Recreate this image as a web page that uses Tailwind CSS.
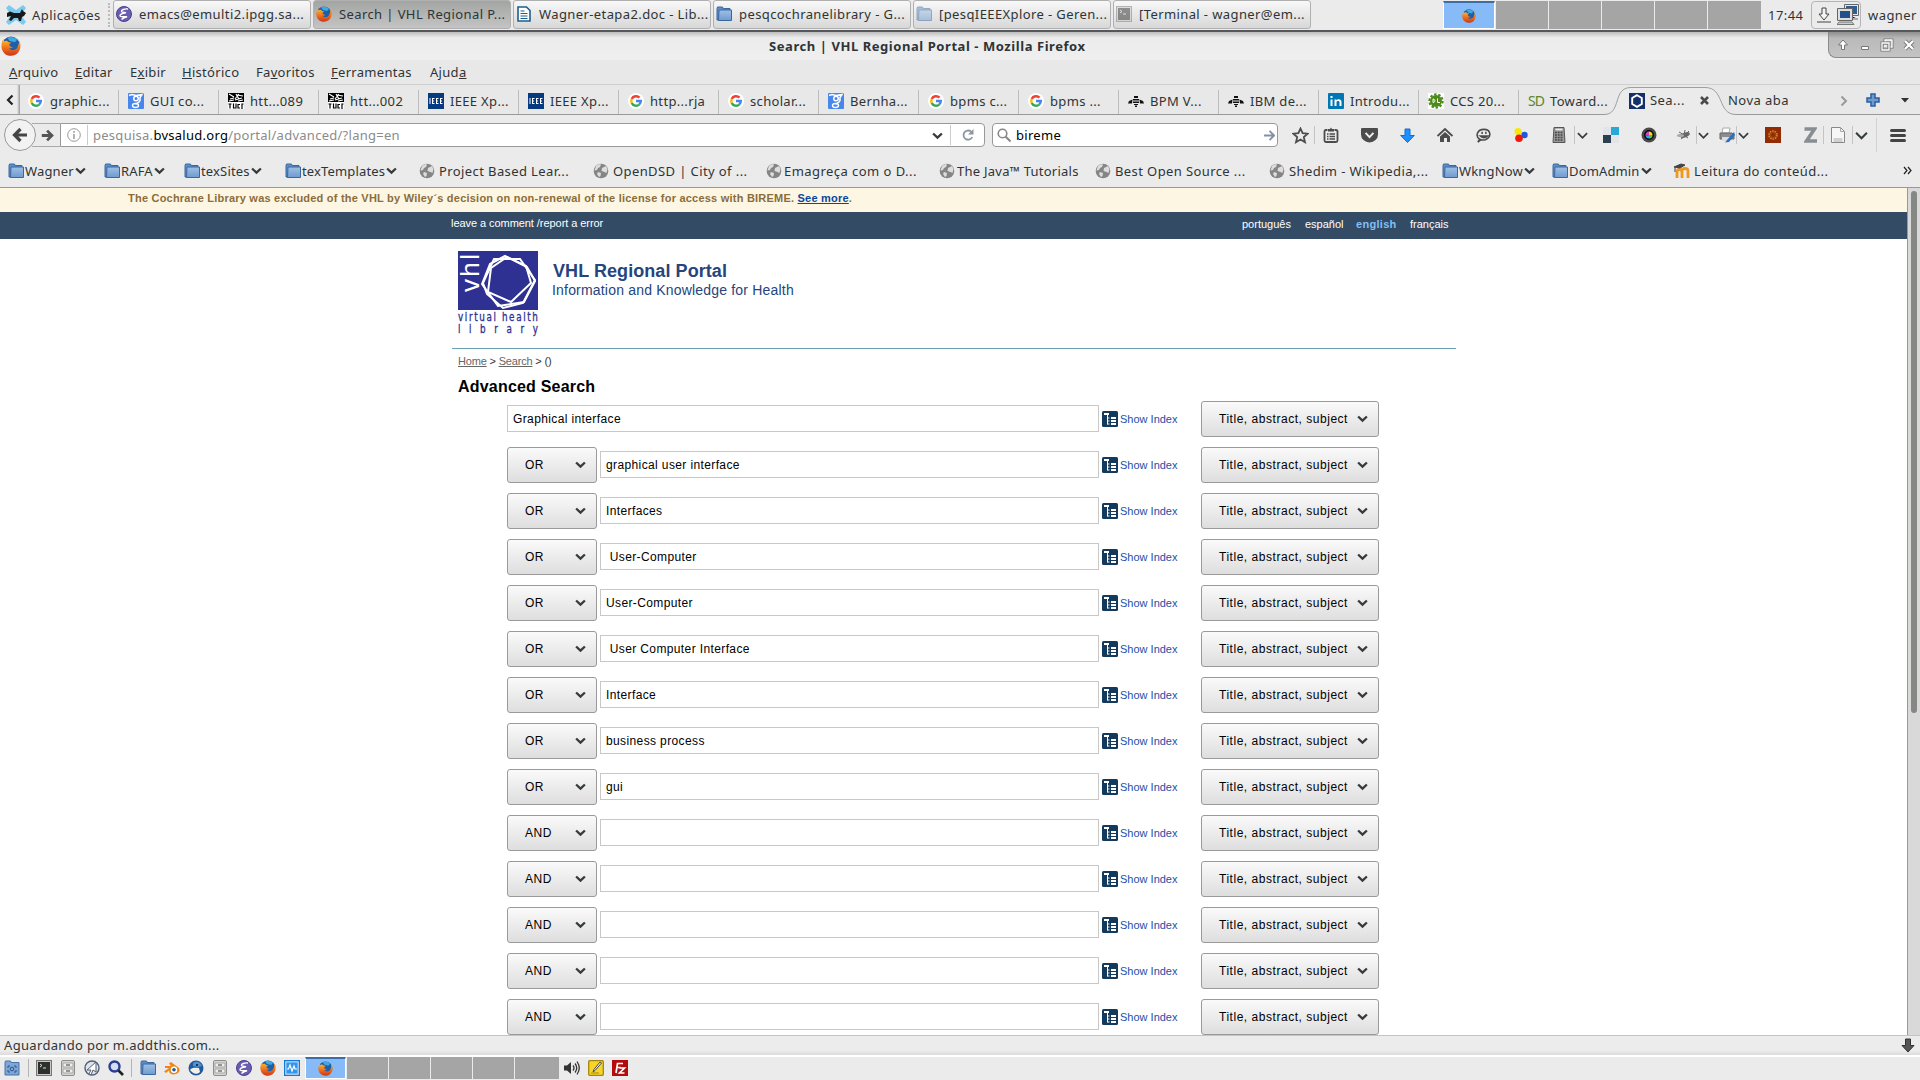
<!DOCTYPE html>
<html lang="pt">
<head>
<meta charset="utf-8">
<title>Search | VHL Regional Portal</title>
<script src="https://cdn.jsdelivr.net/npm/@tailwindcss/browser@4"></script>
</head>
<body class="w-[1920px] h-[1080px] overflow-hidden flex flex-col bg-[#ececec] font-['Noto_Sans',sans-serif] text-[13px] leading-4 tracking-[0.45px] text-[#2e3436] whitespace-nowrap">
<svg class="absolute size-0">
  <defs>
    <linearGradient id="fo" x1="0" y1="0" x2="0" y2="1"><stop offset="0" stop-color="#ffb52b"/><stop offset=".5" stop-color="#f0701c"/><stop offset="1" stop-color="#c9371a"/></linearGradient>
    <linearGradient id="fd" x1="0" y1="0" x2="0" y2="1"><stop offset="0" stop-color="#9dc0e6"/><stop offset="1" stop-color="#6f9bcf"/></linearGradient>
  </defs>
  <symbol id="firefox" viewBox="0 0 16 16"><circle cx="8" cy="7.6" r="7.2" fill="#1e5fa8"/><path d="M5 1.500C7 .3 11 .5 13 3l-2 2-4-1z" fill="#3fa9e0"/><path d="M1.200 3.200C0 7-.2 11 2.600 13.700c3 2.900 8.400 2.700 11-.4C16 10.500 16.200 6 14.300 3.300c.3 2.200-.1 3.600-.8 4.700-.2 3.400-5.500 4.200-6.900 1.700 1.200.4 2.300 0 3-.7-1.900-.1-3.200-1.300-3-2.600.5-.5 1.300-.5 1.700-1C7 4.800 5.600 4.900 5 3.900c-.9-.2-1.700 0-2.300.3z" fill="url(#fo)"/></symbol>
  <symbol id="folder" viewBox="0 0 16 16"><path d="M1 2.500 1.500 1h5l.7 1.500H14V14H1z" fill="#5f8fc8" stroke="#3a679f"/><path d="M3 4h12.500v10.500H2.500z" fill="url(#fd)" stroke="#3a679f"/></symbol>
  <symbol id="emacs" viewBox="0 0 16 16"><circle cx="8" cy="8" r="7.500" fill="#6a5db0" stroke="#4a4190"/><path d="M12 3C8.500 2.500 5 4 5.500 5.500c.6 1.200 3 .8 4.500 1.200-4.500.3-6.500 2.300-6 3.300.8 1.600 5 .2 7 .7-1.500.3-4 1.300-5.500 2.800" fill="none" stroke="#fff" stroke-width="1.400"/></symbol>
  <symbol id="google" viewBox="0 0 16 16"><circle cx="8" cy="8" r="8" fill="#fff"/><g fill="none" stroke-width="2.400"><path d="M11.500 4.700A4.800 4.800 0 0 0 3.700 6" stroke="#ea4335"/><path d="M3.700 6a4.800 4.800 0 0 0 0 4" stroke="#fbbc05"/><path d="M3.700 10a4.800 4.800 0 0 0 7.500 1.600" stroke="#34a853"/><path d="M11.200 11.600A4.800 4.800 0 0 0 12.800 8H8" stroke="#4285f4"/></g></symbol>
  <symbol id="scholar" viewBox="0 0 16 16"><rect width="16" height="16" rx="1" fill="#4787ed"/><path d="M1 2.500 4 1.500l4 1 6-1-2 3v3c-1 3-4 2-4 4" fill="none" stroke="#fff" stroke-width="1.500"/><circle cx="8" cy="5.500" r="2.300" fill="none" stroke="#fff" stroke-width="1.500"/><ellipse cx="7.500" cy="12.500" rx="3" ry="2" fill="none" stroke="#fff" stroke-width="1.400"/></symbol>
  <symbol id="mono" viewBox="0 0 16 16"><rect width="16" height="16" fill="#fff"/><path d="M0 0h16v9H0z"/><path d="M1 1l5 3M8 1l3 5M2 6l4-1M9 2l6 1M7 7l7-2M11 1l-4 5M1 8l5-1M10 8l5-1" stroke="#fff" stroke-width="1.200"/><path d="M.5 11h3M2 11v4.500M5.500 10.500V15H8v-4.500M12 11.500h-2V15h2M14 16v-5h1.500" fill="none" stroke="#000" stroke-width="1.200"/></symbol>
  <symbol id="ieee" viewBox="0 0 16 16"><rect width="16" height="16" fill="#063b82"/><path d="M2 5v6M4 5.500h2.500M4 8h2M4 10.500h2.500M4.500 5v6M8 5.500h2.500M8 8h2M8 10.500h2.500M8.500 5v6M12 5.500h2.500M12 8h2M12 10.500h2.500M12.500 5v6" stroke="#fff"/></symbol>
  <symbol id="bee" viewBox="0 0 16 16"><path d="M6 3h4v2H6zM5 6h6v1.500H5zM5 8.500h6V10H5zM6 11h4v1H6zM7 12.500h2V14H7zM4.500 6.500 1 8 0 10.500h4zM11.500 6.500 15 8l1 2.500h-4z" fill="#111"/></symbol>
  <symbol id="in" viewBox="0 0 16 16"><rect width="16" height="16" rx="1" fill="#0077b5"/><path d="M2.500 6.500h2V13h-2zM2.500 3h2v2h-2zM6.500 6.500h2v1c1-1.700 5-1.800 5 1.700V13h-2V9.500c0-2-3-1.800-3 0V13h-2z" fill="#fff"/></symbol>
  <symbol id="dl" viewBox="0 0 16 16"><rect width="16" height="16" fill="#fff"/><circle cx="8" cy="8" r="6" fill="#4d8a1c"/><circle cx="8" cy="8" r="6.700" fill="none" stroke="#4d8a1c" stroke-width="2" stroke-dasharray="2.500 1.700"/><path d="M5 6v3.500c2.500 0 2.500-3.500 0-3.500M9.500 5.500v4H12" fill="none" stroke="#fff" stroke-width="1"/></symbol>
  <symbol id="hex" viewBox="0 0 16 16"><rect width="16" height="16" fill="#14306b"/><path d="M8 2.200 12.800 5v6L8 13.800 3.200 11V5z" fill="none" stroke="#fff" stroke-width="1.900"/></symbol>
  <symbol id="globe" viewBox="0 0 16 16"><circle cx="8" cy="8" r="7.300" fill="#858585"/><path d="M3 3c2-2 4-2 5-1.500L7 4 5 5 4 7 1.500 7.500zM9 5l4-2 1.500 3-1 4-2-1-3-1zM5 9l3 1-.5 3-1.500 1-2-3z" fill="#ddd"/></symbol>
  <symbol id="chev" viewBox="0 0 10 10"><path d="M1 3.200 5 7l4-3.800" fill="none" stroke="#363b3d" stroke-width="2.100"/></symbol>
  <symbol id="chevthin" viewBox="0 0 12 12"><path d="M1 3.500 6 8.500l5-5" fill="none" stroke="#363b3d" stroke-width="1.900"/></symbol>
  <symbol id="idx" viewBox="0 0 16 16"><rect width="16" height="16" rx="1.500" fill="#133a5c"/><path d="M5.500 3v10.500M5.500 7h2M5.500 13h2M5.500 10h2" fill="none" stroke="#fff"/><path d="M9 7h5M9 10h5M9 13h5M2 3h5" stroke="#fff" stroke-width="1.900"/></symbol>
  <symbol id="cabinet" viewBox="0 0 16 16"><rect x="1.500" y=".5" width="13" height="15" rx="1.500" fill="#d5d6d2" stroke="#8d8f8a"/><path d="M3 3h10v4H3zM3 9h10v4H3z" fill="#eee" stroke="#a5a7a2"/><path d="M6 5h4M6 11h4" stroke="#777" stroke-width="1.300"/></symbol>
  <symbol id="term" viewBox="0 0 16 16"><rect x=".5" y=".5" width="15" height="15" fill="#c9cac6" stroke="#777"/><rect x="2" y="2" width="12" height="12" fill="#2b302d"/><path d="m4 4 2 1.500L4 7M7 8h3" fill="none" stroke="#ddd"/></symbol>
</svg>

<!-- desktop panel -->
<header class="h-8 shrink-0 flex items-start border-b-2 border-[#55575a] bg-[#ebebeb]">
  <div class="w-[113px] h-[29px] flex items-center pl-[6px] gap-[5px]">
    <svg class="w-[21px] h-[22px]" viewBox="0 0 21 22"><path d="M3 1 10 6l7-5 3 3-5 7 5 7-3 3-7-5-7 5-3-3 5-7-5-7z" fill="#7ccaf0"/><path d="M1 9l3-1.500L8 9h6l2-4 1 2 3 2-2 3-2 1-1 4h-2l-1-3H8l-3 3-2-1 2-4-4 1z" fill="#181818"/></svg>
    <span>Aplicações</span>
    <span class="ml-[2px] h-6 border-l-2 border-dotted border-[#bbb]"></span>
  </div>
  <div id="tasks" class="flex gap-[2px] w-[1330px]"></div>
  <div class="flex gap-[1px] h-[28px] mt-[1px]">
    <div class="w-[52px] border border-white border-t-2 border-t-[#3c6ea5] bg-[#86bbf7] grid place-items-center"><svg class="size-[14px]"><use href="#firefox"/></svg></div>
    <div class="w-[52px] bg-[#a5a5a5]"></div><div class="w-[52px] bg-[#a5a5a5]"></div><div class="w-[52px] bg-[#a5a5a5]"></div><div class="w-[52px] bg-[#a5a5a5]"></div><div class="w-[53px] bg-[#a5a5a5]"></div>
  </div>
  <div class="h-[29px] flex items-center pl-[7px]">
    <span class="w-[43px]">17:44</span>
    <div class="w-[50px] h-[28px] border border-[#b5b5b5] rounded-sm flex items-center justify-between pl-[5px] pr-[1px]">
      <svg class="w-[14px] h-[16px]" viewBox="0 0 14 16"><path d="M5 1h4v6h3l-5 6-5-6h3zM0 15h14" fill="#f4f4f4" stroke="#444"/></svg>
      <svg class="w-[22px] h-[21px]" viewBox="0 0 22 21"><path d="M8 1h13v10H8z" fill="#2e5c95" stroke="#e8e8e8" stroke-width="2"/><path d="M7.500.500h14v11h-14z" fill="none" stroke="#666"/><path d="M14 12v3h7" stroke="#aaa" stroke-width="2"/><path d="M2 6h12v9H2z" fill="#24508a" stroke="#ddd" stroke-width="2"/><path d="M.500 4.500h15v12H.500z" fill="none" stroke="#666"/><path d="M2 18h13l2 2.500H0z" fill="#ccc" stroke="#777"/></svg>
    </div>
    <span class="ml-[7px]">wagner</span>
  </div>
</header>

<!-- window title -->
<div class="h-7 shrink-0 flex items-center bg-linear-to-b from-[#bdbdbd] via-[#ececec] via-20% to-[#efefef]">
  <svg class="size-[20px] ml-[1px]"><use href="#firefox"/></svg>
  <div class="w-[1807px] pl-[748px] pb-px font-bold tracking-[0.56px]">Search | VHL Regional Portal - Mozilla Firefox</div>
  <div class="w-[92px] h-[26px] self-start bg-linear-to-b from-[#8f8f8f] via-[#b9b9b9] via-25% to-[#c4c4c4] border-l border-b border-[#8a8a8a] rounded-bl-lg flex items-center gap-[6px] pl-[6px]">
    <svg class="size-4" viewBox="0 0 16 16"><path d="M8 3 12.500 8H9.500v4.500h-3V8h-3z" fill="#fff" stroke="#777"/></svg>
    <svg class="size-4" viewBox="0 0 16 16"><path d="M4.500 9.500h7v3h-7z" fill="#fff" stroke="#777"/></svg>
    <svg class="size-4" viewBox="0 0 16 16"><path d="M6 3h7v7H6z" fill="none" stroke="#777" stroke-width="3"/><path d="M6 3h7v7H6z" fill="#bbb" stroke="#fff" stroke-width="1.300"/><path d="M3 6h7v7H3z" fill="#bbb" stroke="#777" stroke-width="3"/><path d="M3 6h7v7H3zM5 9h3" fill="none" stroke="#fff" stroke-width="1.300"/></svg>
    <svg class="size-4" viewBox="0 0 16 16"><path d="m4 4 8 8M12 4l-8 8" stroke="#777" stroke-width="4"/><path d="m4 4 8 8M12 4l-8 8" stroke="#fff" stroke-width="2.300"/></svg>
  </div>
</div>

<!-- menu -->
<nav class="h-[25px] shrink-0 flex items-center pl-[9px] bg-[#e8e8e8] border-b border-[#cfcfcf] tracking-[0.3px]">
  <span class="w-[66px]"><u>A</u>rquivo</span><span class="w-[55px]"><u>E</u>ditar</span><span class="w-[52px]">E<u>x</u>ibir</span><span class="w-[74px]"><u>H</u>istórico</span><span class="w-[75px]">Fa<u>v</u>oritos</span><span class="w-[99px]"><u>F</u>erramentas</span><span>Ajud<u>a</u></span>
</nav>

<!-- tabs -->
<div class="h-[30px] shrink-0 flex items-center border-b border-[#999] bg-[#e8e8e8] relative">
  <div class="w-[20px] h-full shrink-0 flex items-center justify-center bg-linear-to-r from-[#ececec] from-85% to-[#999]"><svg class="w-[8px] h-[12px]" viewBox="0 0 8 12"><path d="M6.500 1.500 2 6l4.500 4.500" fill="none" stroke="#222" stroke-width="2.200"/></svg></div>
  <div id="tabs" class="flex h-6 mt-1 -ml-[1px] w-[1600px] shrink-0"></div>
  <div class="relative h-full w-[109px] shrink-0 flex items-center">
    <svg class="absolute -left-[15px] top-0 w-[132px] h-[31px]" viewBox="0 0 132 31"><path d="M0 31V29.500C18 29.500 8 2.500 27 2.500h74c20 0 12 27 31 27V31z" fill="#ebebeb"/><path d="M0 29.500C18 29.500 8 2.500 27 2.500h74c20 0 12 27 31 27" fill="none" stroke="#9aa0a6"/></svg>
    <svg class="relative size-[16px] ml-[10px] mt-[2px]"><use href="#hex"/></svg>
    <span class="relative ml-[5px] w-[50px]">Sea...</span>
    <svg class="relative size-[9px] mt-[2px]" viewBox="0 0 9 9"><path d="m1 1 7 7M8 1 1 8" stroke="#4a4a4a" stroke-width="2.600"/></svg>
  </div>
  <span class="w-[112px]">Nova aba</span>
  <svg class="w-[8px] h-[12px] mt-[2px]" viewBox="0 0 8 12"><path d="M1.500 1.500 6 6 1.500 10.500" fill="none" stroke="#999" stroke-width="2"/></svg>
  <svg class="size-[14px] ml-[18px] mt-px" viewBox="0 0 14 14"><path d="M5 1h4v4h4v4H9v4H5V9H1V5h4z" fill="#6d9bd2" stroke="#2b5d9e" stroke-width="1.500"/></svg>
  <svg class="w-[8px] h-[5px] ml-[21px] mt-[2px]" viewBox="0 0 8 5"><path d="M0 0h8L4 4.500z" fill="#2e3436"/></svg>
</div>

<!-- navigation -->
<div class="h-[41px] shrink-0 flex items-center bg-[#ebebeb] pb-px">
  <div class="size-[32px] ml-[4px] rounded-full border border-[#999] bg-[#f2f2f2] grid place-items-center z-10"><svg class="size-[16px]" viewBox="0 0 16 16"><path d="M8.500 2 2.500 8l6 6M3 8h12" fill="none" stroke="#454545" stroke-width="3.200"/></svg></div>
  <div class="w-[28px] h-[24px] -ml-[4px] border-y border-[#aaa] grid place-items-center pl-[3px]"><svg class="size-[13px]" viewBox="0 0 16 16"><path d="M7.500 2 13.500 8l-6 6M13 8H1" fill="none" stroke="#555" stroke-width="3.400"/></svg></div>
  <div class="w-[925px] h-[24px] bg-white border border-[#999] rounded-r-sm flex items-center">
    <svg class="size-[14px] ml-[6px] shrink-0" viewBox="0 0 14 14"><circle cx="7" cy="7" r="6.300" fill="none" stroke="#999"/><path d="M7 3v1.700M7 6v5" stroke="#999" stroke-width="1.500"/></svg>
    <span class="ml-[6px] pl-[5px] h-[20px] border-l border-[#ccc] flex-1 text-[#8c8c8c] leading-[20px] tracking-[0.27px]">pesquisa.<span class="text-black">bvsalud.org</span>/portal/advanced/?lang=en</span>
    <svg class="size-[11px] mr-[7px]"><use href="#chev"/></svg>
    <span class="h-[20px] w-[34px] border-l border-[#ccc] grid place-items-center"><svg class="size-[14px]" viewBox="0 0 14 14"><path d="M10 3.500A4.600 4.600 0 1 0 11.300 9" fill="none" stroke="#8d96a0" stroke-width="1.800"/><path d="M12.500 1v5.500H7z" fill="#8d96a0"/></svg></span>
  </div>
  <div class="w-[286px] h-[24px] ml-[7px] bg-white border border-[#999] rounded-sm flex items-center pl-[4px] pr-[2px] text-black">
    <svg class="size-[14px]" viewBox="0 0 14 14"><circle cx="5.500" cy="5.500" r="4.300" fill="none" stroke="#888" stroke-width="1.600"/><path d="m8.500 8.500 5 5" stroke="#888" stroke-width="2"/></svg>
    <span class="ml-[5px] flex-1 tracking-[0.3px]">bireme</span>
    <svg class="size-[11px]" viewBox="0 0 12 12"><path d="M6 1l5 5-5 5M11 6H0" fill="none" stroke="#8392a3" stroke-width="2"/></svg>
  </div>
  <div class="flex items-center h-full ml-[8px]">
    <div class="w-[28px] grid place-items-center"><svg class="size-[17px]" viewBox="0 0 17 17"><path d="m8.500 1.500 2.100 4.700 5 .5-3.800 3.400 1.200 5.100-4.500-2.700L4 15.200l1.200-5.100L1.400 6.700l5-.5z" fill="none" stroke="#4c4c4c" stroke-width="1.800"/></svg></div>
    <div class="w-px h-[18px] bg-[#c4c4c4]"></div>
    <div class="w-[35px] pr-[4px] grid place-items-center"><svg class="size-[16px]" viewBox="0 0 16 16"><path d="M4.500 3H3Q1.500 3 1.500 4.500v9Q1.500 15 3 15h10q1.500 0 1.500-1.500v-9Q14.500 3 13 3h-1.500" fill="none" stroke="#4c4c4c" stroke-width="1.800"/><path d="M5 4.500V2h2l1-1.500L9 2h2v2.500z" fill="#4c4c4c"/><path d="M4 7h1.500M6.500 7H12M4 9.500h1.500M6.500 9.500H12M4 12h1.500M6.500 12H12" stroke="#4c4c4c" stroke-width="1.500"/></svg></div>
    <div class="w-[38px] grid place-items-center"><svg class="w-[17px] h-[15px]" viewBox="0 0 16 14"><path d="M1 0h14q1 0 1 1v5a8 7.500 0 0 1-16 0V1q0-1 1-1z" fill="#4c4c4c"/><path d="m4.300 4.500 3.700 4 3.700-4" fill="none" stroke="#eee" stroke-width="1.900"/></svg></div>
    <div class="w-[38px] grid place-items-center"><svg class="size-[15px]" viewBox="0 0 15 15"><path d="M5 1h5v6.500h4.300L7.500 14.500.700 7.500H5z" fill="#1e90ff" stroke="#0f6fd4"/></svg></div>
    <div class="w-[38px] grid place-items-center"><svg class="size-[16px]" viewBox="0 0 16 16"><path d="M.500 9 8 2l7.500 7" fill="none" stroke="#4c4c4c" stroke-width="1.900"/><path d="M3 9.500 8 5l5 4.500V15h-3v-4H7v4H3z" fill="#4c4c4c"/></svg></div>
    <div class="w-[38px] grid place-items-center"><svg class="size-[15px]" viewBox="0 0 16 16"><path d="M2 15l2-3C-1 9 1 1.500 8.500 1.500S17 9.500 10 12.500q-3 .5-4.500 0z" fill="none" stroke="#4c4c4c" stroke-width="1.700"/><path d="M6.500 4v2.500M10.500 4v2.500M4.500 8.500q4 3.500 8 0z" stroke="#4c4c4c" stroke-width="1.600" fill="#4c4c4c"/></svg></div>
    <div class="w-[38px] grid place-items-center"><svg class="size-[14px]" viewBox="0 0 14 14"><circle cx="4" cy="3.500" r="3.500" fill="#f8e800"/><circle cx="10.500" cy="7" r="3.200" fill="#1f57e0"/><circle cx="5" cy="10.200" r="3.800" fill="#f01808"/></svg></div>
    <div class="w-[34px] pl-[4px] grid place-items-center"><svg class="size-[16px]" viewBox="0 0 16 16"><path d="M3 .5h10l1 15H2z" fill="#999" stroke="#555"/><path d="M4.500 2.500h7" stroke="#eee" stroke-width="1.600"/><path d="M4 5.500h8M4 8h8M4 10.500h8M4 13h8" stroke="#444" stroke-width="1.300" stroke-dasharray="1.800 1"/></svg></div>
    <div class="w-px h-[18px] bg-[#c4c4c4]"></div><div class="w-[14px] grid place-items-center"><svg class="size-[11px]"><use href="#chevthin"/></svg></div>
    <div class="w-[44px] grid place-items-center"><svg class="size-[16px]" viewBox="0 0 16 16"><path d="M0 0h8v8H0z" fill="#dfe5e8"/><path d="M8 0h8v8H8z" fill="#29a8d6"/><path d="M0 8h8v8H0z" fill="#2b3f50"/><path d="M8 8h8v8H8z" fill="#e2e4e5"/></svg></div>
    <div class="w-[32px] grid place-items-center"><svg class="size-[16px]" viewBox="0 0 16 16"><circle cx="8" cy="8" r="7.500" fill="#4a4a4a"/><circle cx="8" cy="8" r="5" fill="#0b0b0b"/><path d="M8 8V4.500A3.500 3.500 0 0 0 4.600 9z" fill="#e03cc0"/><path d="M8 8V4.500A3.500 3.500 0 0 1 11.500 8z" fill="#f1d821"/><path d="M8 8l-3.400 1A3.500 3.500 0 0 0 8 11.500z" fill="#35a3f2"/><path d="M8 8h3.500A3.500 3.500 0 0 1 8 11.500z" fill="#3fd24a"/></svg></div>
    <div class="w-[31px] pl-[7px] grid place-items-center"><svg class="size-[16px]" viewBox="0 0 16 16"><path d="M3 5l5 3M9 3l-1 5M13 4l-4 4M2 8l5 1M5 12l4-3M12 11l-3-2" stroke="#666"/><ellipse cx="9" cy="8" rx="5" ry="2.300" transform="rotate(-20 9 8)" fill="#666"/><ellipse cx="4.500" cy="8.500" rx="3.500" ry="1.500" fill="#aaa"/></svg></div>
    <div class="w-px h-[18px] bg-[#c4c4c4]"></div><div class="w-[12px] grid place-items-center"><svg class="size-[11px]"><use href="#chevthin"/></svg></div>
    <div class="w-[27px] pl-[8px] grid place-items-center"><svg class="size-[16px]" viewBox="0 0 16 16"><path d="M4 1h7l-1 5H3z" fill="#fff" stroke="#aaa"/><path d="M1 6h12l2 2v4H1z" fill="#8a8d90" stroke="#666"/><path d="M3 10h8v4H3z" fill="#ddd"/><path d="M15 5 8 13l-2 2.500L10 15l6-7z" fill="#2b6fc4"/></svg></div>
    <div class="w-px h-[18px] bg-[#c4c4c4]"></div><div class="w-[12px] grid place-items-center"><svg class="size-[11px]"><use href="#chevthin"/></svg></div>
    <div class="w-[48px] grid place-items-center"><svg class="size-[16px]" viewBox="0 0 16 16"><rect width="16" height="16" fill="#922b06"/><circle cx="8" cy="8" r="4" fill="none" stroke="#d8901e" stroke-width="1.500" stroke-dasharray="1.600 .9"/><circle cx="8" cy="8" r="2.600" fill="none" stroke="#b06010" stroke-width=".6"/></svg></div>
    <div class="w-[26px] grid place-items-center"><svg class="w-[13px] h-[16px]" viewBox="0 0 13 16"><path d="M.5 2h10L2.500 14H13" fill="none" stroke="#878d92" stroke-width="3.600"/></svg></div>
    <div class="w-px h-[18px] bg-[#c4c4c4]"></div>
    <div class="w-[28px] grid place-items-center"><svg class="size-[16px]" viewBox="0 0 16 16"><path d="M1.500.500h9l4 4v11h-13z" fill="#f6f6f6" stroke="#888"/><path d="M10.500.500v4h4M3.500 12h9M3.500 14h9" fill="none" stroke="#aaa"/></svg></div>
    <div class="w-px h-[18px] bg-[#c4c4c4]"></div>
    <div class="w-[16px] grid place-items-center"><svg class="size-[13px]"><use href="#chevthin"/></svg></div>
    <div class="w-px h-[34px] ml-[7px] bg-[#d2d2d2]"></div>
    <div class="w-[42px] flex flex-col items-center gap-[2px]"><div class="w-4 h-[3px] bg-[#444] rounded-full"></div><div class="w-4 h-[3px] bg-[#444] rounded-full"></div><div class="w-4 h-[3px] bg-[#444] rounded-full"></div></div>
  </div>
</div>

<!-- bookmarks -->
<div class="h-[32px] shrink-0 flex items-center border-b border-[#999] pl-[8px] pb-[2px] bg-[#ebebeb]">
  <div id="marks" class="flex items-center w-[1895px]"></div>
  <svg class="size-[9px] shrink-0" viewBox="0 0 9 9"><path d="M1 1l3 3.500L1 8M5 1l3 3.500L5 8" fill="none" stroke="#222" stroke-width="1.200"/></svg>
</div>

<!-- page -->
<div class="flex-1 min-h-0 flex bg-white">
  <main class="w-[1907px] overflow-hidden font-['Liberation_Sans',Arial,sans-serif] text-[11px] leading-4 tracking-normal text-black">
    <div class="h-[24px] bg-[#fdf6e3] pl-[128px] pt-[2px] font-bold text-[#8a6d3b] tracking-[0.22px]">The Cochrane Library was excluded of the VHL by Wiley´s decision on non-renewal of the license for access with BIREME. <a class="text-[#0a47a0] underline">See more</a>.</div>
    <div class="h-[27px] bg-[#344b66] text-white pl-[451px] flex pt-[3px]">
      <span class="w-[791px] tracking-[-0.06px]">leave a comment /report a error</span>
      <span class="w-[63px] pt-px">português</span><span class="w-[51px] pt-px">español</span><span class="w-[54px] pt-px font-bold text-[#7fc0f5] tracking-[0.3px]">english</span><span class="pt-px">français</span>
    </div>
    <div class="ml-[452px] w-[1004px]">
      <div class="h-[110px] border-b border-[#6a9fb3] flex pl-[6px] pt-[12px]">
        <div class="w-[94px]">
          <svg class="w-[80px] h-[88px] overflow-visible" viewBox="0 0 80 88">
            <rect width="80" height="59" fill="#2e3192"/>
            <g fill="none" stroke="#fff" stroke-width="2">
              <path d="M47 5 69 16 77 30 66 51 40 55 24 33 32 13z"/><path d="M36 8 62 8 77 29 65 52 45 57 29 43 25 32z"/><path d="M33 17 49 6 68 15 73 32 53 51 30 41z"/>
            </g>
            <text transform="translate(21 41) rotate(-90)" font-family="Liberation Sans" font-size="26" textLength="38" fill="#fff">vhl</text>
            <g font-family="DejaVu Sans Condensed, sans-serif" font-size="11.500" fill="#2e3192" stroke="#2e3192" stroke-width=".3"><text transform="translate(0 70) scale(.85 1)" textLength="94">virtual health</text><text transform="translate(0 82) scale(.85 1)" textLength="94">library</text></g>
          </svg>
        </div>
        <div class="pt-[9px] text-[#25457c]">
          <div class="text-[18px] leading-[22px] font-bold tracking-[0.07px] pl-[1px]">VHL Regional Portal</div>
          <div class="text-[14px] leading-[16px] tracking-[0.19px]">Information and Knowledge for Health</div>
        </div>
      </div>
      <div class="h-[25px] pl-[6px] leading-[25px] text-[#333] tracking-[-0.18px]"><a class="underline text-[#666]">Home</a> &gt; <a class="underline text-[#666]">Search</a> &gt; ()</div>
      <h1 class="h-[24px] pl-[6px] text-[16px] leading-[26px] font-bold tracking-[0.2px]">Advanced Search</h1>
      <div id="rows" class="pl-[55px] pt-[3px]"></div>
    </div>
  </main>
  <div class="w-[13px] border-l border-[#999] bg-[#d9d9d9] pl-[3px] pt-[3px]"><div class="w-[6px] h-[522px] rounded-full bg-[#858885]"></div></div>
</div>

<!-- status bar -->
<div class="h-[20px] shrink-0 flex items-center justify-between border-t border-[#c4c4c4] bg-linear-to-b from-[#ececec] from-75% to-[#dcdcdc] pl-[4px] pr-[5px] pb-px tracking-[0.33px]">
  <span>Aguardando por m.addthis.com...</span>
  <svg class="w-[14px] h-[15px]" viewBox="0 0 14 15"><path d="M4.500 1h5v6.500H13L7 14 1 7.500h3.500z" fill="#555" stroke="#333"/></svg>
</div>

<!-- bottom panel -->
<footer class="h-[25px] shrink-0 flex items-center border-t-2 border-white bg-[#ebebeb] pb-px">
  <div class="flex items-center gap-[8px] pl-[4px] w-[305px]">
    <svg class="size-4" viewBox="0 0 16 16"><path d="M1 2.500 1.500 1h5l.7 1.500H15V15H1z" fill="#7ea6d6" stroke="#4673ab"/><path d="M4 8V6h2M10 6h2v2M12 10v2h-2M6 12H4v-2" fill="none" stroke="#2c5488"/><circle cx="8" cy="9" r="1.800" fill="none" stroke="#2c5488"/></svg>
    <div class="w-px h-[18px] bg-[#b5b5b5] mr-[-1px]"></div>
    <svg class="size-4"><use href="#term"/></svg>
    <svg class="size-4"><use href="#cabinet"/></svg>
    <svg class="size-4" viewBox="0 0 16 16"><circle cx="8" cy="8" r="7" fill="#dfe3ea" stroke="#4f6078" stroke-width="1.400"/><path d="M12 2v10l-3-2-2 5-2-1 2-4H3z" fill="#fff" stroke="#55606f"/></svg>
    <svg class="size-4" viewBox="0 0 16 16"><circle cx="6.500" cy="6.500" r="5" fill="#d5ddf5" stroke="#2c3e8f" stroke-width="2.400"/><path d="m10.500 10.500 4.500 4.500" stroke="#222" stroke-width="2.600"/></svg>
    <div class="w-px h-[18px] bg-[#b5b5b5] ml-[-1px]"></div>
    <svg class="size-4"><use href="#folder"/></svg>
    <svg class="size-4" viewBox="0 0 16 16"><path d="M1 6h6L5 3.500 7 2l8 6c2 4-2 6.500-5 6.500S5 13 5 10.500L2 13 0 11.500 5 8H1z" fill="#f08418"/><circle cx="10" cy="9.700" r="3.200" fill="#fff"/><circle cx="10" cy="9.700" r="1.800" fill="#1a5a9e"/></svg>
    <svg class="size-4" viewBox="0 0 16 16"><circle cx="8" cy="8" r="7.500" fill="#235a9a"/><path d="M2 10c2-3 6-2 9-2l1 4c-3 3-7 2-10-2z" fill="#f1f1ec"/><path d="M5 3c4-3 8 0 9 3l-4 1-5-1z" fill="#4f93d2"/><circle cx="9" cy="5" r="1" fill="#111"/></svg>
    <svg class="size-4"><use href="#cabinet"/></svg>
    <svg class="size-4"><use href="#emacs"/></svg>
    <svg class="size-4"><use href="#firefox"/></svg>
    <svg class="size-4" viewBox="0 0 16 16"><rect x=".7" y=".7" width="14.600" height="14.600" fill="#fff" stroke="#1478d8" stroke-width="1.400"/><rect x="2.300" y="2.300" width="11.400" height="11.400" fill="#2f95ee"/><path d="M3 9h1.500L6 5l2 6 2-5 1 3h2" fill="none" stroke="#fff" stroke-width="1.200"/></svg>
  </div>
  <div class="flex gap-[1px] h-[22px] w-[254px]">
    <div class="w-[41px] border border-white border-t-2 border-t-[#3c6ea5] bg-[#86bbf7] grid place-items-center"><svg class="size-[15px]"><use href="#firefox"/></svg></div>
    <div class="w-[41px] bg-[#a5a5a5]"></div><div class="w-[41px] bg-[#a5a5a5]"></div><div class="w-[41px] bg-[#a5a5a5]"></div><div class="w-[41px] bg-[#a5a5a5]"></div><div class="w-[44px] bg-[#a5a5a5]"></div>
  </div>
  <svg class="size-4 ml-[5px]" viewBox="0 0 16 16"><path d="M0 5.500h3L7 2v12L3 10.500H0z" fill="#333"/><path d="M9 5.500q2 2.500 0 5M11 3.500q3.500 4.500 0 9M13 1.500q4.500 6.500 0 13" fill="none" stroke="#333" stroke-width="1.300"/></svg>
  <svg class="size-4 ml-[8px]" viewBox="0 0 16 16"><rect x=".7" y=".7" width="14.600" height="14.600" rx="1" fill="#f7d42c" stroke="#a58608" stroke-width="1.300"/><path d="m13.500 3-6.500 7.500-2 1.500 1-2.500L12 2z" fill="#fff" stroke="#444"/><path d="M3 13h8" stroke="#a58608"/></svg>
  <svg class="size-4 ml-[8px]" viewBox="0 0 16 16"><rect width="16" height="16" fill="#b40c0c"/><path d="M4 13 5.500 3.500H11M4.800 7.500h4M7.500 8h5l-5 5h5" fill="none" stroke="#fff" stroke-width="1.700"/></svg>
</footer>

<script>
const icon = (id, cls) => `<svg class="${cls}"><use href="#${id}"/></svg>`;

document.getElementById('tasks').innerHTML = [
  ['emacs', 'emacs@emulti2.ipgg.sa...'],
  ['firefox', 'Search | VHL Regional P...', 'active'],
  ['doc', 'Wagner-etapa2.doc - Lib...'],
  ['folder', 'pesqcochranelibrary - G...'],
  ['folder', '[pesqIEEEXplore - Geren...', 'dim'],
  ['term', '[Terminal - wagner@em...', 'dim'],
].map(([id, label, state]) => {
  const glyph = id === 'doc'
    ? '<svg class="size-4 shrink-0" viewBox="0 0 16 16"><path d="M2 1h8.500L14 4.500V15H2z" fill="#fff" stroke="#1b5f90" stroke-width="1.600"/><path d="M4.500 5h4M4.500 7.500h7M4.500 10h7M4.500 12.500h7" stroke="#1b5f90" stroke-width="1.200"/></svg>'
    : icon(id, state === 'dim' ? 'size-4 shrink-0 opacity-50' : 'size-4 shrink-0');
  const skin = state === 'active' ? 'bg-linear-to-b from-[#a3a5a3] to-[#c3c4c3]' : 'bg-linear-to-b from-[#f8f8f8] to-[#d8d8d8]';
  return `<div class="w-[198px] h-[29px] border border-[#b0b0b0] rounded-[3px] flex items-center gap-[7px] pl-[2px] pb-px overflow-hidden tracking-[0.4px] ${skin}">${glyph}<span>${label}</span></div>`;
}).join('');

const tabs = [['google','graphic...'],['scholar','GUI co...'],['mono','htt...089'],['mono','htt...002'],['ieee','IEEE Xp...'],['ieee','IEEE Xp...'],['google','http...rja'],['google','scholar...'],['scholar','Bernha...'],['google','bpms c...'],['google','bpms ...'],['bee','BPM V...'],['bee','IBM de...'],['in','Introdu...'],['dl','CCS 20...'],['sd','Toward...']];
document.getElementById('tabs').innerHTML = tabs.map(([id, label], i) => {
  const glyph = id === 'sd' ? '<span class="w-4 text-[14px] tracking-[-1px] text-[#5a8727]">SD</span>' : icon(id, 'size-4 shrink-0');
  return `<div class="w-[100px] flex items-center gap-[6px] pl-[9px] pb-[2px] tracking-[0.33px] ${i < 15 ? 'border-r border-[#bdbdbd]' : ''}">${glyph}<span>${label}</span></div>`;
}).join('');

const marks = [['folder','Wagner',96],['folder','RAFA',80],['folder','texSites',101],['folder','texTemplates',134],['globe','Project Based Lear...',174],['globe','OpenDSD | City of ...',173],['globe','Emagreça com o D...',173],['globe','The Java™ Tutorials',156],['globe','Best Open Source ...',174],['globe','Shedim - Wikipedia,...',173],['folder','WkngNow',110],['folder','DomAdmin',122],['moodle','Leitura do conteúd...',160]];
document.getElementById('marks').innerHTML = marks.map(([id, label, w]) => {
  const isFolder = id === 'folder';
  const glyph = id === 'moodle'
    ? '<svg class="size-4 shrink-0" viewBox="0 0 16 16"><path d="M3 15V9q0-2.500 2.500-2.500T8 9v6M8 15V8q0-2.500 3-2.500T14 8v7" fill="none" stroke="#f0981e" stroke-width="2.800"/><path d="M0 4l7-3 4 1-5 3zM1 4v5" fill="#444" stroke="#444"/></svg>'
    : icon(id, 'size-4 shrink-0');
  const gap = isFolder ? 'gap-[1px] tracking-[0.15px]' : label.startsWith('The') ? 'gap-[2px] tracking-[0.25px]' : label.startsWith('Ema') ? 'gap-[2px]' : 'gap-[4px] tracking-[0.4px]';
  return `<div class="shrink-0 flex items-center ${gap}" style="width:${w}px">${glyph}<span>${label}</span>${isFolder ? icon('chev', 'size-[11px]') : ''}</div>`;
}).join('');

const combo = (label, size) => `<div class="${size} h-[36px] shrink-0 border border-[#9a9a9a] rounded-[3px] bg-linear-to-b from-[#fafafa] to-[#dedede] flex items-center justify-between pb-px text-[12px] tracking-[0.53px]"><span>${label}</span>${icon('chev', 'size-[11px]')}</div>`;
const rows = [[null,'Graphical interface'],['OR','graphical user interface'],['OR','Interfaces'],['OR',' User-Computer'],['OR','User-Computer'],['OR',' User Computer Interface'],['OR','Interface'],['OR','business process'],['OR','gui'],['AND',''],['AND',''],['AND',''],['AND',''],['AND','']];
document.getElementById('rows').innerHTML = rows.map(([op, text]) =>
  `<div class="flex items-center mb-[10px] h-[36px]">${op ? combo(op, 'w-[90px] pl-[17px] pr-[10px] mr-[3px]') : ''}<div class="${op ? 'w-[499px]' : 'w-[592px]'} h-[27px] mb-px border border-[#c8c8c8] bg-white pl-[5px] leading-[26px] text-[12px] tracking-[0.38px] whitespace-pre">${text}</div><div class="w-[102px] flex items-center gap-[2px] pl-[3px] text-[#1c4fa8]">${icon('idx', 'size-4')}<span>Show Index</span></div>${combo('Title, abstract, subject', 'w-[178px] pl-[17px] pr-[10px]')}</div>`).join('');
</script>
</body>
</html>
